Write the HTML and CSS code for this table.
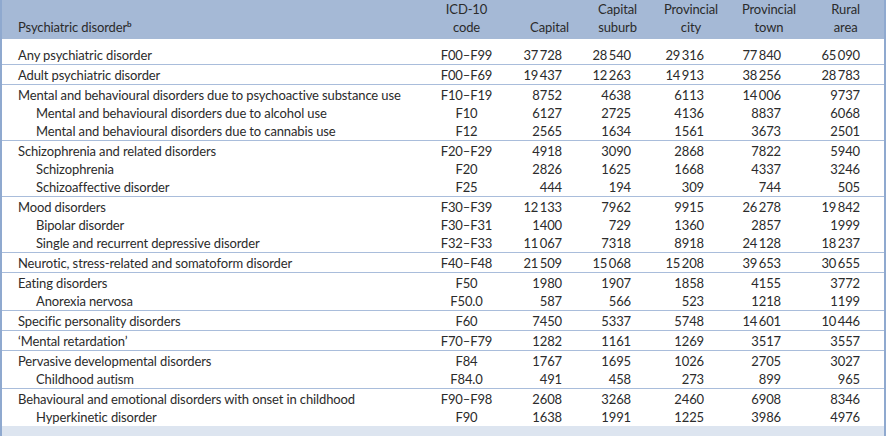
FILE: index.html
```html
<!DOCTYPE html>
<html lang="en">
<head>
<meta charset="utf-8">
<title>Psychiatric disorders by area</title>
<link rel="stylesheet" href="styles.css">
</head>
<body>
<table class="tbl">
  <colgroup>
    <col class="c-name"><col class="c-code"><col class="c-cap"><col class="c-sub"><col class="c-city"><col class="c-town"><col class="c-rural">
  </colgroup>
  <thead>
    <tr>
      <th class="name">Psychiatric disorder<sup>b</sup></th>
      <th class="code"><span class="hd">ICD-10<br>code</span></th>
      <th class="n1"><span class="hd">Capital</span></th>
      <th class="n2"><span class="hd">Capital<br>suburb</span></th>
      <th class="n3"><span class="hd">Provincial<br>city</span></th>
      <th class="n4"><span class="hd">Provincial<br>town</span></th>
      <th class="n5"><span class="hd">Rural<br>area</span></th>
    </tr>
  </thead>
  <tbody class="first">
    <tr><td class="name">Any psychiatric disorder</td><td class="code">F00–F99</td><td class="n1">37&#8201;728</td><td class="n2">28&#8201;540</td><td class="n3">29&#8201;316</td><td class="n4">77&#8201;840</td><td class="n5">65&#8201;090</td></tr>
  </tbody>
  <tbody>
    <tr><td class="name">Adult psychiatric disorder</td><td class="code">F00–F69</td><td class="n1">19&#8201;437</td><td class="n2">12&#8201;263</td><td class="n3">14&#8201;913</td><td class="n4">38&#8201;256</td><td class="n5">28&#8201;783</td></tr>
  </tbody>
  <tbody>
    <tr><td class="name">Mental and behavioural disorders due to psychoactive substance use</td><td class="code">F10–F19</td><td class="n1">8752</td><td class="n2">4638</td><td class="n3">6113</td><td class="n4">14&#8201;006</td><td class="n5">9737</td></tr>
    <tr><td class="name sub">Mental and behavioural disorders due to alcohol use</td><td class="code">F10</td><td class="n1">6127</td><td class="n2">2725</td><td class="n3">4136</td><td class="n4">8837</td><td class="n5">6068</td></tr>
    <tr><td class="name sub">Mental and behavioural disorders due to cannabis use</td><td class="code">F12</td><td class="n1">2565</td><td class="n2">1634</td><td class="n3">1561</td><td class="n4">3673</td><td class="n5">2501</td></tr>
  </tbody>
  <tbody>
    <tr><td class="name">Schizophrenia and related disorders</td><td class="code">F20–F29</td><td class="n1">4918</td><td class="n2">3090</td><td class="n3">2868</td><td class="n4">7822</td><td class="n5">5940</td></tr>
    <tr><td class="name sub">Schizophrenia</td><td class="code">F20</td><td class="n1">2826</td><td class="n2">1625</td><td class="n3">1668</td><td class="n4">4337</td><td class="n5">3246</td></tr>
    <tr><td class="name sub">Schizoaffective disorder</td><td class="code">F25</td><td class="n1">444</td><td class="n2">194</td><td class="n3">309</td><td class="n4">744</td><td class="n5">505</td></tr>
  </tbody>
  <tbody>
    <tr><td class="name">Mood disorders</td><td class="code">F30–F39</td><td class="n1">12&#8201;133</td><td class="n2">7962</td><td class="n3">9915</td><td class="n4">26&#8201;278</td><td class="n5">19&#8201;842</td></tr>
    <tr><td class="name sub">Bipolar disorder</td><td class="code">F30–F31</td><td class="n1">1400</td><td class="n2">729</td><td class="n3">1360</td><td class="n4">2857</td><td class="n5">1999</td></tr>
    <tr><td class="name sub">Single and recurrent depressive disorder</td><td class="code">F32–F33</td><td class="n1">11&#8201;067</td><td class="n2">7318</td><td class="n3">8918</td><td class="n4">24&#8201;128</td><td class="n5">18&#8201;237</td></tr>
  </tbody>
  <tbody>
    <tr><td class="name">Neurotic, stress-related and somatoform disorder</td><td class="code">F40–F48</td><td class="n1">21&#8201;509</td><td class="n2">15&#8201;068</td><td class="n3">15&#8201;208</td><td class="n4">39&#8201;653</td><td class="n5">30&#8201;655</td></tr>
  </tbody>
  <tbody>
    <tr><td class="name">Eating disorders</td><td class="code">F50</td><td class="n1">1980</td><td class="n2">1907</td><td class="n3">1858</td><td class="n4">4155</td><td class="n5">3772</td></tr>
    <tr><td class="name sub">Anorexia nervosa</td><td class="code">F50.0</td><td class="n1">587</td><td class="n2">566</td><td class="n3">523</td><td class="n4">1218</td><td class="n5">1199</td></tr>
  </tbody>
  <tbody>
    <tr><td class="name">Specific personality disorders</td><td class="code">F60</td><td class="n1">7450</td><td class="n2">5337</td><td class="n3">5748</td><td class="n4">14&#8201;601</td><td class="n5">10&#8201;446</td></tr>
  </tbody>
  <tbody>
    <tr><td class="name">‘Mental retardation’</td><td class="code">F70–F79</td><td class="n1">1282</td><td class="n2">1161</td><td class="n3">1269</td><td class="n4">3517</td><td class="n5">3557</td></tr>
  </tbody>
  <tbody>
    <tr><td class="name">Pervasive developmental disorders</td><td class="code">F84</td><td class="n1">1767</td><td class="n2">1695</td><td class="n3">1026</td><td class="n4">2705</td><td class="n5">3027</td></tr>
    <tr><td class="name sub">Childhood autism</td><td class="code">F84.0</td><td class="n1">491</td><td class="n2">458</td><td class="n3">273</td><td class="n4">899</td><td class="n5">965</td></tr>
  </tbody>
  <tbody>
    <tr><td class="name">Behavioural and emotional disorders with onset in childhood</td><td class="code">F90–F98</td><td class="n1">2608</td><td class="n2">3268</td><td class="n3">2460</td><td class="n4">6908</td><td class="n5">8346</td></tr>
    <tr><td class="name sub">Hyperkinetic disorder</td><td class="code">F90</td><td class="n1">1638</td><td class="n2">1991</td><td class="n3">1225</td><td class="n4">3986</td><td class="n5">4976</td></tr>
  </tbody>
  <tfoot>
    <tr><td class="foot" colspan="7"></td></tr>
  </tfoot>
</table>
</body>
</html>
```

FILE: styles.css
```css
html, body {
  margin: 0;
  padding: 0;
  background: #ffffff;
}

.tbl {
  width: 886px;
  table-layout: fixed;
  border-collapse: collapse;
  border-left: 2px solid #8fa9cf;
  border-right: 2px solid #8fa9cf;
  font-family: Lato, "Open Sans", "Liberation Sans", sans-serif;
  font-size: 13px;
  letter-spacing: -0.12px;
  color: #2b2b2b;
}

.c-name { width: 428px; }
.c-code { width: 75px; }
.c-cap { width: 75px; }
.c-sub { width: 70px; }
.c-city { width: 80px; }
.c-town { width: 75px; }
.c-rural { width: 81px; }

thead tr {
  background: #a5b9d6;
}

th {
  font-weight: normal;
  line-height: 18px;
  padding: 0 0 3px 0;
  vertical-align: bottom;
  text-align: right;
}

th.name {
  text-align: left;
  padding-left: 16px;
}

th.code {
  text-align: center;
}

.hd {
  display: inline-block;
  text-align: center;
}

sup {
  font-size: 8px;
  font-weight: bold;
  line-height: 0;
  vertical-align: 5px;
}

td {
  line-height: 18px;
  padding: 0;
  white-space: nowrap;
  text-align: right;
}

tbody tr:first-child td {
  padding-top: 1px;
}

tbody.first tr:first-child td {
  padding-top: 7px;
}

tbody + tbody {
  border-top: 1px solid #a9bddb;
}

td.name {
  text-align: left;
  padding-left: 16px;
}

td.name.sub {
  padding-left: 34px;
}

td.code {
  text-align: center;
}

th.n1 { padding-right: 10px; }
th.n2 { padding-right: 12px; }
th.n3 { padding-right: 11px; }
th.n4 { padding-right: 8px; }
th.n5 { padding-right: 24px; }

td.n1 { padding-right: 17px; }
td.n2 { padding-right: 18px; }
td.n3 { padding-right: 25px; }
td.n4 { padding-right: 23px; }
td.n5 { padding-right: 24px; }

td.foot {
  height: 11px;
  padding: 0;
  background: #dde5f0;
}
```
